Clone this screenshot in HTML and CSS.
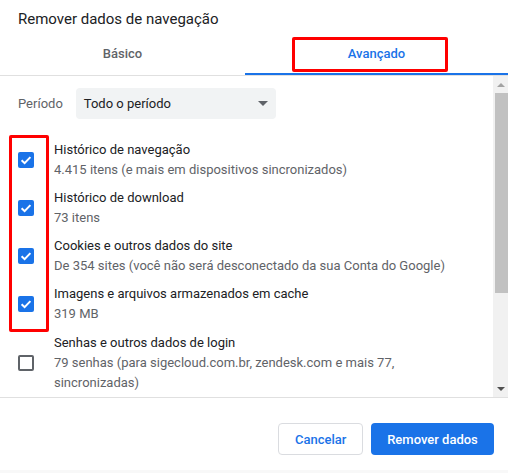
FILE: index.html
```html
<!DOCTYPE html>
<html lang="pt-BR">
<head>
<meta charset="utf-8">
<title>Remover dados de navegação</title>
<link rel="stylesheet" href="styles.css">
</head>
<body>
<div class="dialog">
  <div class="title">Remover dados de navegação</div>
  <div class="tabs">
    <div class="tab">Básico</div>
    <div class="tab active">Avançado</div>
  </div>
  <div class="body">
    <div class="content">
      <div class="period">
        <span class="period-label">Período</span>
        <div class="select">
          <span>Todo o período</span>
          <span class="caret"></span>
        </div>
      </div>
      <div class="items">
        <div class="item">
          <span class="cb checked"><svg viewBox="0 0 16 16" width="16" height="16"><path d="M3.6 8.2 L6.6 11.1 L12.4 5.1" fill="none" stroke="#fff" stroke-width="2"/></svg></span>
          <div class="texts">
            <div class="t">Histórico de navegação</div>
            <div class="s">4.415 itens (e mais em dispositivos sincronizados)</div>
          </div>
        </div>
        <div class="item">
          <span class="cb checked"><svg viewBox="0 0 16 16" width="16" height="16"><path d="M3.6 8.2 L6.6 11.1 L12.4 5.1" fill="none" stroke="#fff" stroke-width="2"/></svg></span>
          <div class="texts">
            <div class="t">Histórico de download</div>
            <div class="s">73 itens</div>
          </div>
        </div>
        <div class="item">
          <span class="cb checked"><svg viewBox="0 0 16 16" width="16" height="16"><path d="M3.6 8.2 L6.6 11.1 L12.4 5.1" fill="none" stroke="#fff" stroke-width="2"/></svg></span>
          <div class="texts">
            <div class="t">Cookies e outros dados do site</div>
            <div class="s">De 354 sites (você não será desconectado da sua Conta do Google)</div>
          </div>
        </div>
        <div class="item">
          <span class="cb checked"><svg viewBox="0 0 16 16" width="16" height="16"><path d="M3.6 8.2 L6.6 11.1 L12.4 5.1" fill="none" stroke="#fff" stroke-width="2"/></svg></span>
          <div class="texts">
            <div class="t">Imagens e arquivos armazenados em cache</div>
            <div class="s">319 MB</div>
          </div>
        </div>
        <div class="item">
          <span class="cb"></span>
          <div class="texts">
            <div class="t">Senhas e outros dados de login</div>
            <div class="s">79 senhas (para sigecloud.com.br, zendesk.com e mais 77, sincronizadas)</div>
          </div>
        </div>
      </div>
    </div>
    <div class="scrollbar">
      <span class="arrow up"></span>
      <span class="thumb"></span>
      <span class="track-rest"></span>
      <span class="arrow down"></span>
    </div>
  </div>
  <div class="footer">
    <button class="btn secondary">Cancelar</button>
    <button class="btn primary">Remover dados</button>
  </div>
  <div class="bottom-strip"></div>

  <div class="mark mark-tab"></div>
  <div class="mark mark-checks"></div>
</div>
</body>
</html>
```
FILE: styles.css
```css
* { box-sizing: border-box; }
html, body { margin: 0; padding: 0; background: #fff; }
body {
  font-family: Roboto, "Liberation Sans", Arial, sans-serif;
  color: #202124;
  width: 508px;
  height: 473px;
  overflow: hidden;
}
.dialog {
  position: relative;
  width: 508px;
  height: 473px;
  display: flex;
  flex-direction: column;
}
.title {
  padding: 9px 0 0 18px;
  height: 29px;
  font-size: 15px;
  line-height: 20px;
  color: #202124;
}
.tabs {
  display: flex;
  border-bottom: 1px solid #e0e0e0;
  height: 47px;
}
.tab {
  padding-top: 15px;
  height: 46px;
  line-height: 20px;
  font-size: 13px;
  font-weight: 500;
  color: #5f6368;
  text-align: center;
  border-bottom: 2px solid transparent;
}
.tab:first-child { width: 245px; }
.tab.active {
  flex: 1;
  color: #1a73e8;
  border-bottom-color: #1a73e8;
}
.body {
  display: flex;
  height: 321px;
  overflow: hidden;
}
.content {
  flex: 1;
  overflow: hidden;
  padding: 12px 0 0 18px;
}
.period {
  display: flex;
  align-items: center;
  gap: 13px;
  height: 31px;
  font-size: 13px;
}
.period-label { color: #5f6368; }
.select {
  width: 200px;
  height: 31px;
  background: #f1f3f4;
  border-radius: 4px;
  display: flex;
  align-items: center;
  justify-content: space-between;
  padding: 0 8px 0 8px;
  color: #202124;
}
.caret {
  width: 0;
  height: 0;
  border-left: 5px solid transparent;
  border-right: 5px solid transparent;
  border-top: 5px solid #5f6368;
}
.items {
  margin-top: 21px;
  display: flex;
  flex-direction: column;
  gap: 8px;
}
.item {
  display: flex;
  align-items: center;
  gap: 20px;
  font-size: 13px;
  line-height: 20px;
}
.item:last-child { margin-top: 1px; }
.texts { flex: 1; padding-right: 30px; }
.t { color: #202124; }
.s { color: #5f6368; }
.cb {
  flex: none;
  width: 16px;
  height: 16px;
  border-radius: 2px;
  border: 2px solid #5f6368;
  display: flex;
}
.cb.checked {
  border: none;
  background: #1a73e8;
}
.scrollbar {
  width: 15px;
  background: #f1f1f1;
  display: flex;
  flex-direction: column;
  align-items: flex-end;
}
.arrow {
  width: 15px;
  height: 17px;
  display: flex;
  align-items: center;
  justify-content: center;
}
.arrow::before {
  content: "";
  width: 0;
  height: 0;
  border-left: 4px solid transparent;
  border-right: 4px solid transparent;
}
.arrow.up::before { border-bottom: 4px solid #a3a3a3; }
.arrow.down::before { border-top: 4px solid #505050; }
.thumb {
  width: 13px;
  height: 200px;
  background: #c1c1c1;
}
.track-rest { flex: 1; }
.footer {
  border-top: 1px solid #e0e0e0;
  display: flex;
  justify-content: flex-end;
  gap: 8px;
  padding: 25px 14px 0 0;
  height: 73px;
}
.btn {
  height: 32px;
  border-radius: 4px;
  font-family: Roboto, "Liberation Sans", Arial, sans-serif;
  font-size: 13px;
  font-weight: 500;
  padding: 0 16px;
  cursor: pointer;
}
.btn.secondary {
  width: 85px;
  background: #fff;
  color: #1a73e8;
  border: 1px solid #dadce0;
}
.btn.primary {
  width: 123px;
  background: #1a73e8;
  color: #fff;
  border: none;
}
.bottom-strip {
  flex: 1;
  background: #f8f8f8;
}
.mark {
  position: absolute;
  border: 3px solid #f00;
  border-radius: 2px;
}
.mark-tab { left: 292px; top: 37px; width: 156px; height: 35px; }
.mark-checks { left: 9px; top: 135px; width: 40px; height: 197px; }
```
